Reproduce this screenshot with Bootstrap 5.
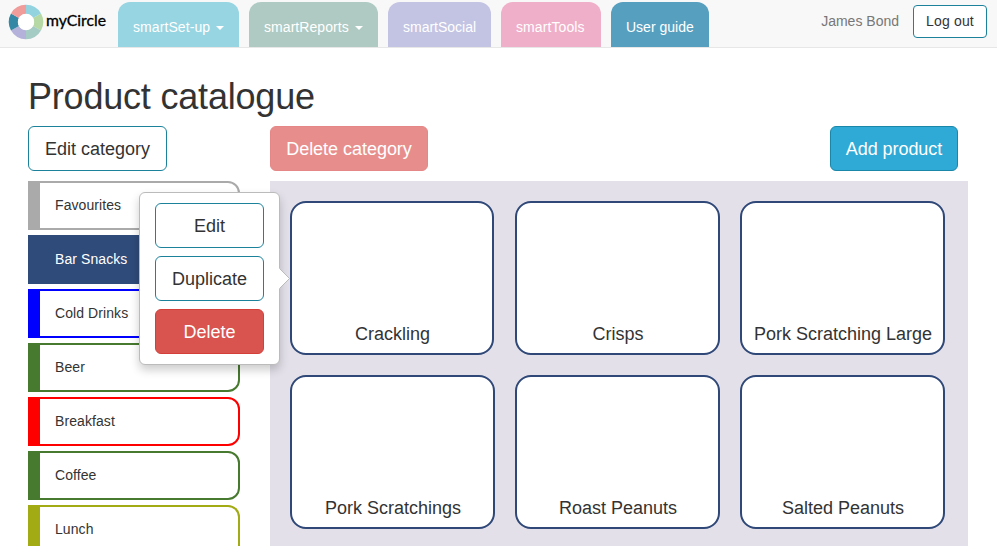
<!DOCTYPE html>
<html lang="en">
<head>
<meta charset="utf-8">
<meta name="viewport" content="width=device-width, initial-scale=1">
<title>Product catalogue</title>
<link rel="stylesheet" href="https://cdn.jsdelivr.net/npm/bootstrap@5.3.0/dist/css/bootstrap.min.css">
<style>
body{font-family:"Liberation Sans",Arial,sans-serif;font-size:14px;line-height:20px;color:#333;height:546px;overflow:hidden}
.topbar{height:48px;background:#f8f8f8;border-bottom:1px solid #e7e7e7;padding:0 10px 0 8px}
.brand{width:110px}
.tabs{gap:10px;padding-top:2px}
.tabs .nav-link{height:45px;padding:15px 15px 10px;color:#fff;border-radius:12px 12px 0 0;white-space:nowrap}
.tabs .dropdown-toggle::after{border-width:4px 4px 0;margin-left:6px;vertical-align:middle}
.tabs .t-setup{background:#97d5e2;width:121px;letter-spacing:.08px}
.tabs .t-reports{background:#afcac2;width:129px;letter-spacing:.06px}
.tabs .t-social{background:#c3c4e3;width:103px}
.tabs .t-tools{background:#f0afc8;width:100px;letter-spacing:.1px}
.tabs .t-guide{background:#579fbf;width:98px}
.user{color:#777;margin-right:14px;padding-top:11px}
.btn{--bs-btn-color:#333;--bs-btn-bg:#fff;--bs-btn-border-color:#1c829c;--bs-btn-font-size:14px;--bs-btn-line-height:20px;--bs-btn-padding-x:12px;--bs-btn-padding-y:6px;--bs-btn-border-radius:4px;white-space:nowrap}
.btn-lg{--bs-btn-font-size:18px;--bs-btn-line-height:23px;--bs-btn-padding-x:16px;--bs-btn-border-radius:6px;height:45px;padding-top:11px;padding-bottom:9px}
.logout{width:74px;height:33px;margin-top:5px;padding:4px 0 6px;letter-spacing:.15px}
.btn-remove{--bs-btn-color:#fff;--bs-btn-bg:#d9534f;--bs-btn-border-color:#d43f3a}
.btn-faded{--bs-btn-color:#fff;--bs-btn-bg:#e78e8d;--bs-btn-border-color:#e58786;width:158px;padding-left:15px;padding-right:15px;letter-spacing:-.03px}
.btn-add{--bs-btn-color:#fff;--bs-btn-bg:#2fa9d5;--bs-btn-border-color:#1a87a9;width:128px;padding-left:0;padding-right:0;letter-spacing:-.06px}
.page{padding:27px 29px 0 28px;height:498px;overflow:hidden}
.page h1{font-size:36px;line-height:44px;margin:0 0 7px;letter-spacing:-.2px}
.side{width:212px;margin-right:30px}
.cats{gap:5px;margin-top:10px;height:365px;overflow:hidden}
.cat{--c:#aaa;height:49px;flex-shrink:0;border:2px solid var(--c);border-left-width:12px;border-radius:0 12px 12px 0;padding:12px 15px;background:#fff;letter-spacing:.08px}
.cat-blue{--c:#0000fe}.cat-green{--c:#47792f}.cat-red{--c:#fe0000}.cat-olive{--c:#a2aa14}
.cat-navy{--c:#2f4b79;background:#2f4b79;color:#fff}
.cat-last{height:41px;border-bottom:0;border-radius:0 12px 0 0;padding-bottom:0}
.actions{padding-right:10px}
.panel{background:#e3e0e9;margin-top:10px;padding:20px 23px 0 20px;height:365px}
.tiles{display:grid;grid-template-columns:repeat(3,205px);gap:20px}
.tile{height:154px;border:2px solid #2f4878;border-radius:16px;background:#fff;font-size:18px;padding:0 0 9px 1px;white-space:nowrap}
.tile:first-child{width:204px}
.menu{position:absolute;left:139px;top:192px;width:141px;height:173px;padding:10px 15px;gap:8px;background:#fff;border:1px solid #bbb;border-radius:6px;box-shadow:0 5px 10px rgba(0,0,0,.2)}
.menu .btn{height:45px;padding-left:0;padding-right:0}
.menu svg{position:absolute;left:139px;top:74px}
</style>
</head>
<body>
<nav class="topbar d-flex align-items-start">
  <a class="brand d-block" href="#" aria-label="myCircle">
    <svg class="d-block" width="108" height="44" viewBox="8 0 108 44">
      <g transform="rotate(-90 26 22)" fill="none" stroke-width="9.2">
        <circle cx="26" cy="22" r="12.7" stroke="#93d3e0" pathLength="6" stroke-dasharray="1 5"/>
        <circle cx="26" cy="22" r="12.7" stroke="#b5d8a4" pathLength="6" stroke-dasharray="1 5" stroke-dashoffset="-1"/>
        <circle cx="26" cy="22" r="12.7" stroke="#a5cbc5" pathLength="6" stroke-dasharray="1 5" stroke-dashoffset="-2"/>
        <circle cx="26" cy="22" r="12.7" stroke="#b4b1da" pathLength="6" stroke-dasharray="1 5" stroke-dashoffset="-3"/>
        <circle cx="26" cy="22" r="12.7" stroke="#3587a6" pathLength="6" stroke-dasharray="1 5" stroke-dashoffset="-4"/>
        <circle cx="26" cy="22" r="12.7" stroke="#f09c9a" pathLength="6" stroke-dasharray="1 5" stroke-dashoffset="-5"/>
      </g>
      <circle cx="26" cy="22" r="8.2" fill="#fff"/>
      <text x="46" y="26" font-family="Lato, sans-serif" font-size="15" fill="#000" stroke="#000" stroke-width=".3" textLength="60" lengthAdjust="spacingAndGlyphs">myCircle</text>
    </svg>
  </a>
  <div class="tabs nav flex-nowrap">
    <a class="nav-link dropdown-toggle t-setup" href="#">smartSet-up</a>
    <a class="nav-link dropdown-toggle t-reports" href="#">smartReports</a>
    <a class="nav-link t-social" href="#">smartSocial</a>
    <a class="nav-link t-tools" href="#">smartTools</a>
    <a class="nav-link t-guide" href="#">User guide</a>
  </div>
  <span class="user ms-auto">James Bond</span>
  <button class="btn logout">Log out</button>
</nav>
<main class="page">
  <h1>Product catalogue</h1>
  <div class="d-flex align-items-start">
    <aside class="side flex-shrink-0">
      <button class="btn btn-lg">Edit category</button>
      <div class="cats d-flex flex-column">
        <div class="cat">Favourites</div>
        <div class="cat cat-navy">Bar Snacks</div>
        <div class="cat cat-blue">Cold Drinks</div>
        <div class="cat cat-green">Beer</div>
        <div class="cat cat-red">Breakfast</div>
        <div class="cat cat-green">Coffee</div>
        <div class="cat cat-olive cat-last">Lunch</div>
      </div>
    </aside>
    <section class="flex-grow-1">
      <div class="actions d-flex justify-content-between">
        <button class="btn btn-lg btn-faded">Delete category</button>
        <button class="btn btn-lg btn-add">Add product</button>
      </div>
      <div class="panel">
        <div class="tiles">
          <div class="tile d-flex align-items-end justify-content-center">Crackling</div>
          <div class="tile d-flex align-items-end justify-content-center">Crisps</div>
          <div class="tile d-flex align-items-end justify-content-center">Pork Scratching Large</div>
          <div class="tile d-flex align-items-end justify-content-center">Pork Scratchings</div>
          <div class="tile d-flex align-items-end justify-content-center">Roast Peanuts</div>
          <div class="tile d-flex align-items-end justify-content-center">Salted Peanuts</div>
        </div>
      </div>
    </section>
  </div>
</main>
<div class="menu d-flex flex-column">
  <button class="btn btn-lg">Edit</button>
  <button class="btn btn-lg">Duplicate</button>
  <button class="btn btn-lg btn-remove">Delete</button>
  <svg width="12" height="23" viewBox="0 0 12 23"><path d="M0 1 10.5 11.5 0 22" fill="#fff"/><path d="M.5 1.5 10.5 11.5 .5 21.5" fill="none" stroke="#bbb"/></svg>
</div>
<script src="https://cdn.jsdelivr.net/npm/bootstrap@5.3.0/dist/js/bootstrap.bundle.min.js"></script>
</body>
</html>
